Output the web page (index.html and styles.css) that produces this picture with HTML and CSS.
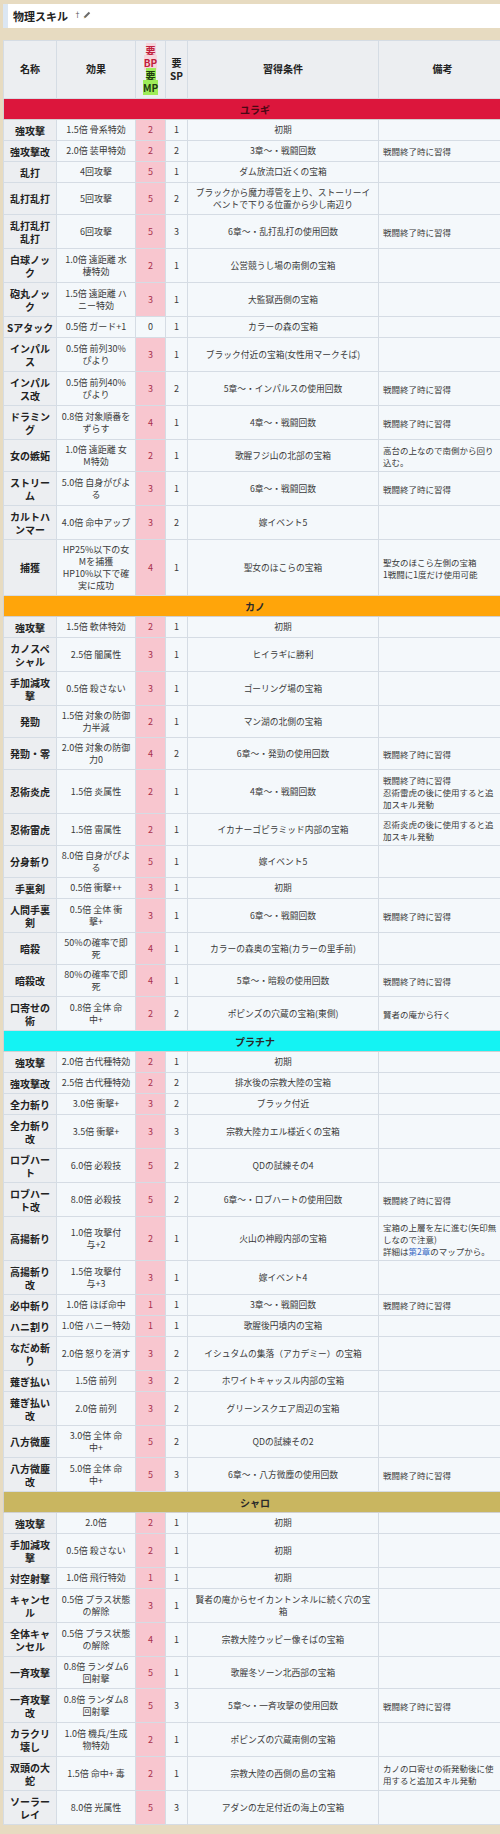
FILE: index.html
```html
<!DOCTYPE html>
<html lang="ja">
<head>
<meta charset="utf-8">
<title>物理スキル</title>
<link rel="stylesheet" href="styles.css">
</head>
<body>
<div class="page">
  <h3 class="title">物理スキル<sup class="dagger">†</sup><svg class="pencil" width="8" height="8" viewBox="0 0 10 10"><path d="M1 9 L1.6 6.6 L7.2 1 L9 2.8 L3.4 8.4 Z" fill="#6a6a6a"/><path d="M1 9 L1.6 6.6 L3.4 8.4 Z" fill="#c9a36a"/></svg></h3>
  <div class="table-wrap">
    <table class="skills">
      <colgroup>
        <col class="c-name"><col class="c-eff"><col class="c-bp"><col class="c-sp"><col class="c-cond"><col class="c-note">
      </colgroup>
      <thead>
        <tr>
          <th>名称</th>
          <th>効果</th>
          <th class="cost"><span class="bp">要<br>BP</span><br><span class="mp">要<br>MP</span></th>
          <th>要<br>SP</th>
          <th>習得条件</th>
          <th>備考</th>
        </tr>
      </thead>
      <tbody>
        <tr class="sec yuragi"><td colspan="6">ユラギ</td></tr>
        <tr><th>強攻撃</th><td>1.5倍 骨系特効</td><td class="bpv">2</td><td>1</td><td class="cond">初期</td><td class="note"></td></tr>
        <tr><th>強攻撃改</th><td>2.0倍 装甲特効</td><td class="bpv">2</td><td>2</td><td class="cond">3章～・戦闘回数</td><td class="note">戦闘終了時に習得</td></tr>
        <tr><th>乱打</th><td>4回攻撃</td><td class="bpv">5</td><td>1</td><td class="cond">ダム放流口近くの宝箱</td><td class="note"></td></tr>
        <tr><th>乱打乱打</th><td>5回攻撃</td><td class="bpv">5</td><td>2</td><td class="cond">ブラックから魔力導管を上り、ストーリーイ<br>ベントで下りる位置から少し南辺り</td><td class="note"></td></tr>
        <tr><th>乱打乱打<br>乱打</th><td>6回攻撃</td><td class="bpv">5</td><td>3</td><td class="cond">6章～・乱打乱打の使用回数</td><td class="note">戦闘終了時に習得</td></tr>
        <tr><th>白球ノッ<br>ク</th><td>1.0倍 遠距離 水<br>棲特効</td><td class="bpv">2</td><td>1</td><td class="cond">公営競うし場の南側の宝箱</td><td class="note"></td></tr>
        <tr><th>砲丸ノッ<br>ク</th><td>1.5倍 遠距離 ハ<br>ニー特効</td><td class="bpv">3</td><td>1</td><td class="cond">大監獄西側の宝箱</td><td class="note"></td></tr>
        <tr><th>Sアタック</th><td>0.5倍 ガード+1</td><td class="bpv zero">0</td><td>1</td><td class="cond">カラーの森の宝箱</td><td class="note"></td></tr>
        <tr><th>インパル<br>ス</th><td>0.5倍 前列30%<br>ぴより</td><td class="bpv">3</td><td>1</td><td class="cond">ブラック付近の宝箱(女性用マークそば)</td><td class="note"></td></tr>
        <tr><th>インパル<br>ス改</th><td>0.5倍 前列40%<br>ぴより</td><td class="bpv">3</td><td>2</td><td class="cond">5章～・インパルスの使用回数</td><td class="note">戦闘終了時に習得</td></tr>
        <tr><th>ドラミン<br>グ</th><td>0.8倍 対象順番を<br>ずらす</td><td class="bpv">4</td><td>1</td><td class="cond">4章～・戦闘回数</td><td class="note">戦闘終了時に習得</td></tr>
        <tr><th>女の嫉妬</th><td>1.0倍 遠距離 女<br>M特効</td><td class="bpv">2</td><td>1</td><td class="cond">歌腥フジ山の北部の宝箱</td><td class="note">高台の上なので南側から回り<br>込む。</td></tr>
        <tr><th>ストリー<br>ム</th><td>5.0倍 自身がぴよ<br>る</td><td class="bpv">3</td><td>1</td><td class="cond">6章～・戦闘回数</td><td class="note">戦闘終了時に習得</td></tr>
        <tr><th>カルトハ<br>ンマー</th><td>4.0倍 命中アップ</td><td class="bpv">3</td><td>2</td><td class="cond">嫁イベント5</td><td class="note"></td></tr>
        <tr><th>捕獲</th><td>HP25%以下の女<br>Mを捕獲<br>HP10%以下で確<br>実に成功</td><td class="bpv">4</td><td>1</td><td class="cond">聖女のほこらの宝箱</td><td class="note">聖女のほこら左側の宝箱<br>1戦闘に1度だけ使用可能</td></tr>

        <tr class="sec kano"><td colspan="6">カノ</td></tr>
        <tr><th>強攻撃</th><td>1.5倍 軟体特効</td><td class="bpv">2</td><td>1</td><td class="cond">初期</td><td class="note"></td></tr>
        <tr><th>カノスペ<br>シャル</th><td>2.5倍 闇属性</td><td class="bpv">3</td><td>1</td><td class="cond">ヒイラギに勝利</td><td class="note"></td></tr>
        <tr><th>手加減攻<br>撃</th><td>0.5倍 殺さない</td><td class="bpv">3</td><td>1</td><td class="cond">ゴーリング場の宝箱</td><td class="note"></td></tr>
        <tr><th>発勁</th><td>1.5倍 対象の防御<br>力半減</td><td class="bpv">2</td><td>1</td><td class="cond">マン湖の北側の宝箱</td><td class="note"></td></tr>
        <tr><th>発勁・零</th><td>2.0倍 対象の防御<br>力0</td><td class="bpv">4</td><td>2</td><td class="cond">6章～・発勁の使用回数</td><td class="note">戦闘終了時に習得</td></tr>
        <tr><th>忍術炎虎</th><td>1.5倍 炎属性</td><td class="bpv">2</td><td>1</td><td class="cond">4章～・戦闘回数</td><td class="note">戦闘終了時に習得<br>忍術雷虎の後に使用すると追<br>加スキル発動</td></tr>
        <tr><th>忍術雷虎</th><td>1.5倍 雷属性</td><td class="bpv">2</td><td>1</td><td class="cond">イカナーゴピラミッド内部の宝箱</td><td class="note">忍術炎虎の後に使用すると追<br>加スキル発動</td></tr>
        <tr><th>分身斬り</th><td>8.0倍 自身がぴよ<br>る</td><td class="bpv">5</td><td>1</td><td class="cond">嫁イベント5</td><td class="note"></td></tr>
        <tr><th>手裏剣</th><td>0.5倍 衝撃++</td><td class="bpv">3</td><td>1</td><td class="cond">初期</td><td class="note"></td></tr>
        <tr><th>人間手裏<br>剣</th><td>0.5倍 全体 衝<br>撃+</td><td class="bpv">3</td><td>1</td><td class="cond">6章～・戦闘回数</td><td class="note">戦闘終了時に習得</td></tr>
        <tr><th>暗殺</th><td>50%の確率で即<br>死</td><td class="bpv">4</td><td>1</td><td class="cond">カラーの森奥の宝箱(カラーの里手前)</td><td class="note"></td></tr>
        <tr><th>暗殺改</th><td>80%の確率で即<br>死</td><td class="bpv">4</td><td>1</td><td class="cond">5章～・暗殺の使用回数</td><td class="note">戦闘終了時に習得</td></tr>
        <tr><th>口寄せの<br>術</th><td>0.8倍 全体 命<br>中+</td><td class="bpv">2</td><td>2</td><td class="cond">ポピンズの穴蔵の宝箱(東側)</td><td class="note">賢者の庵から行く</td></tr>

        <tr class="sec platina"><td colspan="6">プラチナ</td></tr>
        <tr><th>強攻撃</th><td>2.0倍 古代種特効</td><td class="bpv">2</td><td>1</td><td class="cond">初期</td><td class="note"></td></tr>
        <tr><th>強攻撃改</th><td>2.5倍 古代種特効</td><td class="bpv">2</td><td>2</td><td class="cond">排水後の宗教大陸の宝箱</td><td class="note"></td></tr>
        <tr><th>全力斬り</th><td>3.0倍 衝撃+</td><td class="bpv">3</td><td>2</td><td class="cond">ブラック付近</td><td class="note"></td></tr>
        <tr><th>全力斬り<br>改</th><td>3.5倍 衝撃+</td><td class="bpv">3</td><td>3</td><td class="cond">宗教大陸カエル様近くの宝箱</td><td class="note"></td></tr>
        <tr><th>ロブハー<br>ト</th><td>6.0倍 必殺技</td><td class="bpv">5</td><td>2</td><td class="cond">QDの試練その4</td><td class="note"></td></tr>
        <tr><th>ロブハー<br>ト改</th><td>8.0倍 必殺技</td><td class="bpv">5</td><td>2</td><td class="cond">6章～・ロブハートの使用回数</td><td class="note">戦闘終了時に習得</td></tr>
        <tr><th>高揚斬り</th><td>1.0倍 攻撃付<br>与+2</td><td class="bpv">2</td><td>1</td><td class="cond">火山の神殿内部の宝箱</td><td class="note">宝箱の上層を左に進む(矢印無<br>しなので注意)<br>詳細は<a class="link" href="#">第2章</a>のマップから。</td></tr>
        <tr><th>高揚斬り<br>改</th><td>1.5倍 攻撃付<br>与+3</td><td class="bpv">3</td><td>1</td><td class="cond">嫁イベント4</td><td class="note"></td></tr>
        <tr><th>必中斬り</th><td>1.0倍 ほぼ命中</td><td class="bpv">1</td><td>1</td><td class="cond">3章～・戦闘回数</td><td class="note">戦闘終了時に習得</td></tr>
        <tr><th>ハニ割り</th><td>1.0倍 ハニー特効</td><td class="bpv">1</td><td>1</td><td class="cond">歌腥後円墳内の宝箱</td><td class="note"></td></tr>
        <tr><th>なだめ斬<br>り</th><td>2.0倍 怒りを消す</td><td class="bpv">3</td><td>2</td><td class="cond">イシュタムの集落（アカデミー）の宝箱</td><td class="note"></td></tr>
        <tr><th>薙ぎ払い</th><td>1.5倍 前列</td><td class="bpv">3</td><td>2</td><td class="cond">ホワイトキャッスル内部の宝箱</td><td class="note"></td></tr>
        <tr><th>薙ぎ払い<br>改</th><td>2.0倍 前列</td><td class="bpv">3</td><td>2</td><td class="cond">グリーンスクエア周辺の宝箱</td><td class="note"></td></tr>
        <tr><th>八方微塵</th><td>3.0倍 全体 命<br>中+</td><td class="bpv">5</td><td>2</td><td class="cond">QDの試練その2</td><td class="note"></td></tr>
        <tr><th>八方微塵<br>改</th><td>5.0倍 全体 命<br>中+</td><td class="bpv">5</td><td>3</td><td class="cond">6章～・八方微塵の使用回数</td><td class="note">戦闘終了時に習得</td></tr>

        <tr class="sec sharo"><td colspan="6">シャロ</td></tr>
        <tr><th>強攻撃</th><td>2.0倍</td><td class="bpv">2</td><td>1</td><td class="cond">初期</td><td class="note"></td></tr>
        <tr><th>手加減攻<br>撃</th><td>0.5倍 殺さない</td><td class="bpv">2</td><td>1</td><td class="cond">初期</td><td class="note"></td></tr>
        <tr><th>対空射撃</th><td>1.0倍 飛行特効</td><td class="bpv">1</td><td>1</td><td class="cond">初期</td><td class="note"></td></tr>
        <tr><th>キャンセ<br>ル</th><td>0.5倍 プラス状態<br>の解除</td><td class="bpv">3</td><td>1</td><td class="cond">賢者の庵からセイカントンネルに続く穴の宝<br>箱</td><td class="note"></td></tr>
        <tr><th>全体キャ<br>ンセル</th><td>0.5倍 プラス状態<br>の解除</td><td class="bpv">4</td><td>1</td><td class="cond">宗教大陸ウッピー像そばの宝箱</td><td class="note"></td></tr>
        <tr><th>一斉攻撃</th><td>0.8倍 ランダム6<br>回射撃</td><td class="bpv">5</td><td>1</td><td class="cond">歌腥冬ソーン北西部の宝箱</td><td class="note"></td></tr>
        <tr><th>一斉攻撃<br>改</th><td>0.8倍 ランダム8<br>回射撃</td><td class="bpv">5</td><td>3</td><td class="cond">5章～・一斉攻撃の使用回数</td><td class="note">戦闘終了時に習得</td></tr>
        <tr><th>カラクリ<br>壊し</th><td>1.0倍 機兵/生成<br>物特効</td><td class="bpv">2</td><td>1</td><td class="cond">ポピンズの穴蔵南側の宝箱</td><td class="note"></td></tr>
        <tr><th>双頭の大<br>蛇</th><td>1.5倍 命中+ 毒</td><td class="bpv">2</td><td>1</td><td class="cond">宗教大陸の西側の島の宝箱</td><td class="note">カノの口寄せの術発動後に使<br>用すると追加スキル発動</td></tr>
        <tr><th>ソーラー<br>レイ</th><td>8.0倍 光属性</td><td class="bpv">5</td><td>3</td><td class="cond">アダンの左足付近の海上の宝箱</td><td class="note"></td></tr>
      </tbody>
    </table>
  </div>
</div>
</body>
</html>
```

FILE: styles.css
```css
html, body {
  margin: 0;
  padding: 0;
  overflow-x: hidden;
}

body {
  background: #e7dbc1;
  font-family: "Noto Sans CJK JP", "Noto Sans", sans-serif;
  color: #333;
}

.page {
  padding: 4px 0 0 3px;
}

.title {
  margin: 0;
  height: 24px;
  display: flex;
  align-items: center;
  padding-left: 5px;
  background: #fff;
  border-left: 5px solid #dce7f3;
  font-size: 11px;
  font-weight: bold;
  color: #222;
}

.dagger {
  font-size: 7px;
  font-weight: normal;
  margin-left: 6px;
  align-self: flex-start;
  margin-top: 5px;
  color: #555;
}

.pencil {
  margin-left: 2px;
  margin-top: -3px;
}

.table-wrap {
  margin-top: 12px;
  overflow: hidden;
}

.skills {
  border-collapse: collapse;
  table-layout: fixed;
  width: 503px;
}

.c-name { width: 53px; }
.c-eff { width: 79px; }
.c-bp { width: 30px; }
.c-sp { width: 22px; }
.c-cond { width: 191px; }
.c-note { width: 128px; }

.skills th,
.skills td {
  border: 1px solid #d5dce4;
  padding: 3.5px 3px;
  text-align: center;
  vertical-align: middle;
  white-space: nowrap;
  overflow: hidden;
}

.skills td {
  font-size: 9px;
  line-height: 12px;
  background: #f4f8fb;
  color: #3a3a3a;
}

.skills th {
  font-size: 10px;
  line-height: 13px;
  font-weight: bold;
  background: #eceef1;
  color: #222;
}

.skills thead th {
  line-height: 12.5px;
}

.bp {
  color: #c0203c;
  background: #f6d5db;
}

.mp {
  color: #1f3a10;
  background: #9eec58;
}

.skills td.bpv {
  background: #f8c6cf;
  color: #a8304c;
}

.skills td.bpv.zero {
  background: #f4f8fb;
  color: #3a3a3a;
}

.skills td.cond {
  font-size: 8.75px;
}

.skills td.note {
  font-size: 8.5px;
  text-align: left;
  padding-left: 4px;
}

.link {
  color: #3468c4;
  text-decoration: none;
}

.skills .sec td {
  font-size: 10px;
  line-height: 13px;
  font-weight: bold;
  color: #2a2a2a;
  border-color: #d0d0d0;
}

.skills .yuragi td { background: #dc163c; color: #4a0814; }
.skills .kano td { background: #ffa50a; }
.skills .platina td { background: #14f3f3; }
.skills .sharo td { background: #c9b660; }
```
